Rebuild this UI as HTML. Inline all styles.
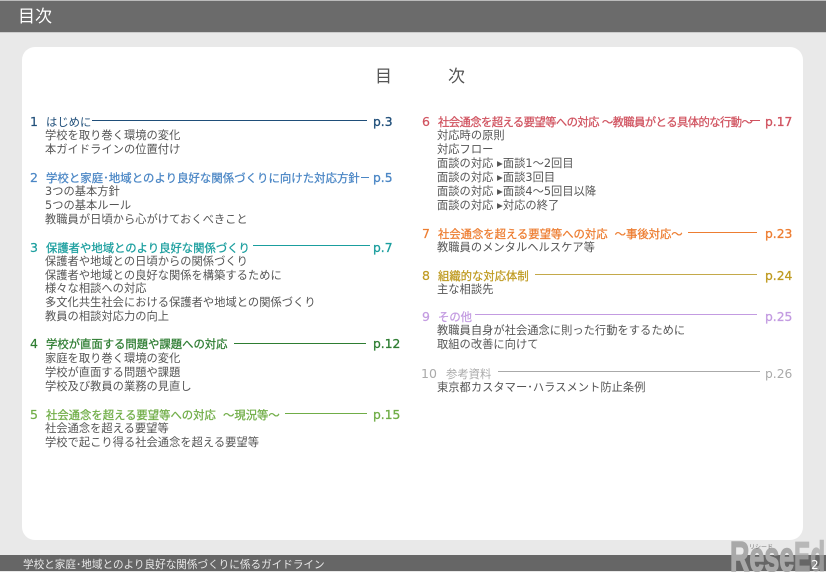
<!DOCTYPE html>
<html lang="ja"><head><meta charset="utf-8"><title>目次</title>
<style>
html,body{margin:0;padding:0;background:#e9e9e9}
#p{position:relative;width:826px;height:572px;overflow:hidden;background:#e9e9e9;font-family:"DejaVu Sans","Noto Sans CJK JP",sans-serif;color:#555}
#p div{position:absolute;white-space:nowrap}
.t{font-size:11.25px;line-height:14px;height:14px;letter-spacing:.03px;margin-top:1px}
.t i{font-style:normal;font-size:7.5px;vertical-align:1px}
.h{font-size:11.35px;line-height:14px;height:14px;-webkit-text-stroke:.25px currentColor;margin-top:1px}
.pg{font-size:12.3px;line-height:14px;height:14px;-webkit-text-stroke:.3px currentColor;margin-top:1px}
.n{font-size:12.5px;line-height:14px;height:14px;margin-top:1px;-webkit-text-stroke:.2px currentColor}
.l{height:1px}
.w{font-family:"Liberation Sans",sans-serif;font-size:42px;line-height:42px;font-weight:700;color:#a8a8a8;-webkit-text-stroke:1.4px #a8a8a8;transform-origin:left top}
</style></head><body><div id="p">
<div style="left:0;top:0;width:826px;height:1px;background:#bbb"></div>
<div style="left:0;top:1px;width:826px;height:31px;background:#6b6b6b;border-bottom:1px solid #ccc"></div>
<div style="left:18px;top:5px;font-size:17px;line-height:24px;color:#fff">目次</div>
<div style="left:22px;top:47px;width:781px;height:493px;background:#fff;border-radius:13px"></div>
<div style="left:375px;top:66px;font-size:17px;line-height:22px;color:#555">目</div>
<div style="left:448px;top:66px;font-size:17px;line-height:22px;color:#555">次</div>

<!-- 1 -->
<div class="n" style="left:30px;top:114px;color:#1f4e79">1</div>
<div class="h" style="left:46px;top:114px;color:#1f4e79;-webkit-text-stroke:0">はじめに</div>
<div class="l" style="left:92px;top:120px;width:275px;background:#1f4e79"></div>
<div class="pg" style="left:373px;top:114px;color:#1f4e79">p.3</div>
<div class="t" style="left:45px;top:128px">学校を取り巻く環境の変化</div>
<div class="t" style="left:45px;top:142px">本ガイドラインの位置付け</div>
<!-- 2 -->
<div class="n" style="left:30px;top:170px;color:#4a86c5">2</div>
<div class="h" style="left:46px;top:170px;color:#4a86c5;letter-spacing:.08px">学校と家庭･地域とのより良好な関係づくりに向けた対応方針</div>
<div class="l" style="left:361px;top:177px;width:8px;background:#4a86c5"></div>
<div class="pg" style="left:373px;top:170px;color:#4a86c5">p.5</div>
<div class="t" style="left:45px;top:184px">3つの基本方針</div>
<div class="t" style="left:45px;top:198px">5つの基本ルール</div>
<div class="t" style="left:45px;top:212px">教職員が日頃から心がけておくべきこと</div>
<!-- 3 -->
<div class="n" style="left:30px;top:240px;color:#1a9e9e">3</div>
<div class="h" style="left:46px;top:240px;color:#1a9e9e">保護者や地域とのより良好な関係づくり</div>
<div class="l" style="left:253px;top:245px;width:117px;background:#1a9e9e"></div>
<div class="pg" style="left:373px;top:240px;color:#1a9e9e">p.7</div>
<div class="t" style="left:45px;top:254px">保護者や地域との日頃からの関係づくり</div>
<div class="t" style="left:45px;top:268px">保護者や地域との良好な関係を構築するために</div>
<div class="t" style="left:45px;top:281px">様々な相談への対応</div>
<div class="t" style="left:45px;top:295px">多文化共生社会における保護者や地域との関係づくり</div>
<div class="t" style="left:45px;top:309px">教員の相談対応力の向上</div>
<!-- 4 -->
<div class="n" style="left:30px;top:336px;color:#2e7d32">4</div>
<div class="h" style="left:46px;top:336px;color:#2e7d32">学校が直面する問題や課題への対応</div>
<div class="l" style="left:234px;top:343px;width:132px;background:#2e7d32"></div>
<div class="pg" style="left:373px;top:336px;color:#2e7d32">p.12</div>
<div class="t" style="left:45px;top:351px">家庭を取り巻く環境の変化</div>
<div class="t" style="left:45px;top:365px">学校が直面する問題や課題</div>
<div class="t" style="left:45px;top:379px">学校及び教員の業務の見直し</div>
<!-- 5 -->
<div class="n" style="left:30px;top:407px;color:#70ad47">5</div>
<div class="h" style="left:46px;top:407px;color:#70ad47">社会通念を超える要望等への対応 &nbsp;～現況等～</div>
<div class="l" style="left:285px;top:413px;width:82px;background:#70ad47"></div>
<div class="pg" style="left:373px;top:407px;color:#70ad47">p.15</div>
<div class="t" style="left:45px;top:421px">社会通念を超える要望等</div>
<div class="t" style="left:45px;top:435px">学校で起こり得る社会通念を超える要望等</div>
<!-- 6 -->
<div class="n" style="left:422px;top:114px;color:#d0525f">6</div>
<div class="h" style="left:438px;top:114px;color:#d0525f;letter-spacing:-.6px">社会通念を超える要望等への対応 ～教職員がとる具体的な行動～</div>
<div class="l" style="left:750px;top:120px;width:10px;background:#d0525f"></div>
<div class="pg" style="left:765px;top:114px;color:#d0525f">p.17</div>
<div class="t" style="left:437px;top:128px">対応時の原則</div>
<div class="t" style="left:437px;top:142px">対応フロー</div>
<div class="t" style="left:437px;top:156px">面談の対応 <i>▶</i>面談1～2回目</div>
<div class="t" style="left:437px;top:170px">面談の対応 <i>▶</i>面談3回目</div>
<div class="t" style="left:437px;top:184px">面談の対応 <i>▶</i>面談4～5回目以降</div>
<div class="t" style="left:437px;top:198px">面談の対応 <i>▶</i>対応の終了</div>
<!-- 7 -->
<div class="n" style="left:422px;top:226px;color:#ed7d31">7</div>
<div class="h" style="left:438px;top:226px;color:#ed7d31;letter-spacing:-.02px">社会通念を超える要望等への対応 &nbsp;～事後対応～</div>
<div class="l" style="left:688px;top:232px;width:69px;background:#ed7d31"></div>
<div class="pg" style="left:765px;top:226px;color:#ed7d31">p.23</div>
<div class="t" style="left:437px;top:240px">教職員のメンタルヘルスケア等</div>
<!-- 8 -->
<div class="n" style="left:422px;top:268px;color:#bf9a20">8</div>
<div class="h" style="left:438px;top:268px;color:#bf9a20">組織的な対応体制</div>
<div class="l" style="left:535px;top:274px;width:222px;background:#c4a94a"></div>
<div class="pg" style="left:765px;top:268px;color:#bf9a20">p.24</div>
<div class="t" style="left:437px;top:282px">主な相談先</div>
<!-- 9 -->
<div class="n" style="left:422px;top:309px;color:#c39be1">9</div>
<div class="h" style="left:438px;top:309px;color:#c39be1">その他</div>
<div class="l" style="left:475px;top:314px;width:282px;background:#c39be1"></div>
<div class="pg" style="left:765px;top:309px;color:#c39be1">p.25</div>
<div class="t" style="left:437px;top:323px">教職員自身が社会通念に則った行動をするために</div>
<div class="t" style="left:437px;top:337px">取組の改善に向けて</div>
<!-- 10 -->
<div class="n" style="left:421px;top:366px;color:#aaa;-webkit-text-stroke:0">10</div>
<div class="h" style="left:446px;top:366px;color:#aaa;-webkit-text-stroke:0">参考資料</div>
<div class="l" style="left:498px;top:371px;width:262px;background:#aaa"></div>
<div class="pg" style="left:765px;top:366px;color:#aaa;-webkit-text-stroke:0">p.26</div>
<div class="t" style="left:437px;top:380px">東京都カスタマー･ハラスメント防止条例</div>

<!-- footer -->
<div style="left:0;top:555px;width:826px;height:16px;background:#666"></div>
<div style="left:0;top:571px;width:826px;height:1px;background:#e9e9e9"></div>
<div style="left:23px;top:558px;font-size:10.6px;line-height:14px;color:#e8e8e8">学校と家庭･地域とのより良好な関係づくりに係るガイドライン</div>
<!-- watermark -->
<div class="w" style="left:730px;top:536px;transform:scaleX(.64)">Rese</div>
<div class="w" style="left:794px;top:536px;transform:scaleX(.58);opacity:.75">Ed</div>
<div style="left:749px;top:544px;font-size:6px;line-height:8px;color:#777">リシード</div>
<div style="left:811px;top:558px;font-size:12px;line-height:14px;color:#fff">2</div>
</div></body></html>
